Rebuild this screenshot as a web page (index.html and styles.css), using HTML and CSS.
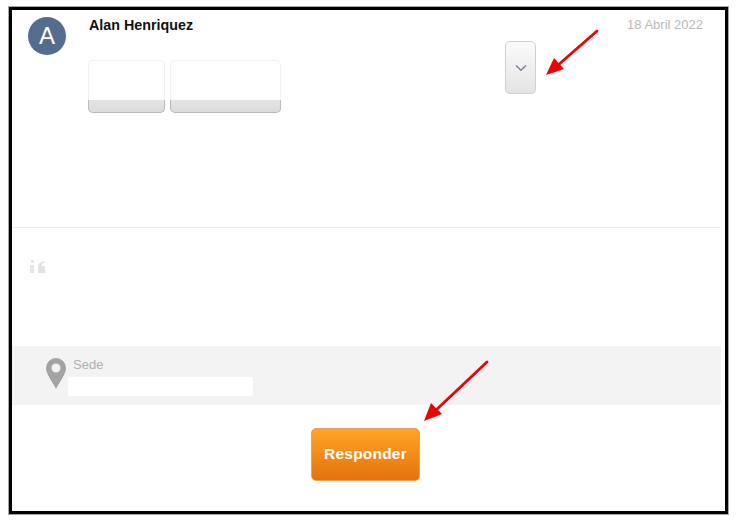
FILE: index.html
```html
<!DOCTYPE html>
<html lang="es">
<head>
<meta charset="utf-8">
<title>Mensaje</title>
<link rel="stylesheet" href="styles.css">
</head>
<body>
<main class="frame">
  <section class="top">
    <div class="avatar">A</div>
    <div class="who">
      <div class="name">Alan Henriquez</div>
      <div class="cards">
        <div class="card card-a"><div class="card-foot"></div></div>
        <div class="card card-b"><div class="card-foot"></div></div>
      </div>
    </div>
    <button class="toggle" aria-label="Expandir">
      <svg width="12" height="8" viewBox="0 0 12 8"><path d="M1 1.500 6 6.200 11 1.500" fill="none" stroke="#7b8594" stroke-width="1.500"/></svg>
    </button>
    <div class="date">18 Abril 2022</div>
  </section>
  <section class="quote">
    <svg width="15" height="13" viewBox="0 0 15 13"><path d="M0 5h4v8H0zM1 0h3v3H1z" fill="#e6e6e6"/><path d="M8 13V7c0-3 2-5 6-6v2c-2 .6-2.500 1.500-2.500 3H15v7z" fill="#e2e2e2"/></svg>
  </section>
  <section class="place">
    <svg class="pin" width="20" height="31" viewBox="0 0 20 31"><path fill-rule="evenodd" d="M10 0a10 10 0 0 1 10 10c0 6-6 13-10 21C6 23 0 16 0 10A10 10 0 0 1 10 0zm0 5.500a4.500 4.500 0 1 0 0 9 4.500 4.500 0 0 0 0-9z" fill="#a3a3a3"/></svg>
    <div class="place-text">
      <div class="place-label">Sede</div>
      <div class="place-value"></div>
    </div>
  </section>
  <div class="actions">
    <button class="reply">Responder</button>
  </div>
</main>
<svg class="arrows" width="739" height="527" viewBox="0 0 739 527">
  <path d="M597 31 557 66" stroke="#f00000" stroke-width="2.800" stroke-linecap="round"/>
  <path d="M546 75 554 58 564 69z" fill="#f00000"/>
  <path d="M487 362 435 411" stroke="#f00000" stroke-width="2.800" stroke-linecap="round"/>
  <path d="M424 421 431 403 442 414z" fill="#f00000"/>
</svg>
</body>
</html>
```
FILE: styles.css
```css
* {
  box-sizing: border-box;
}

html,
body {
  margin: 0;
  height: 100%;
  background: #fff;
  overflow: hidden;
}

body {
  position: relative;
  padding: 7px 0 0 9px;
  font-family: "Liberation Sans", Arial, sans-serif;
}

.frame {
  width: 719px;
  height: 507px;
  border: 3px solid #000;
  box-shadow: 0 0 0 1px rgba(0, 0, 0, 0.35);
  display: flex;
  flex-direction: column;
  background: #fff;
}

.top {
  height: 217px;
  padding: 7px 22px 0 16px;
  display: flex;
  align-items: flex-start;
}

.avatar {
  flex: none;
  width: 38px;
  height: 38px;
  border-radius: 50%;
  background: #546d8e;
  color: #fff;
  font-size: 24px;
  line-height: 38px;
  text-align: center;
}

.who {
  width: 416px;
  margin-left: 23px;
}

.name {
  font-size: 14.3px;
  line-height: 16px;
  font-weight: 700;
  color: #111;
}

.cards {
  display: flex;
  gap: 5px;
  margin-top: 27px;
  margin-left: -1px;
}

.card {
  height: 53px;
  display: flex;
  flex-direction: column;
  justify-content: flex-end;
  border-radius: 5px;
  background: #fff;
  box-shadow: inset 0 0 0 1px #f1f1f1;
}

.card-a {
  width: 77px;
}

.card-b {
  width: 111px;
}

.card-foot {
  height: 13px;
  border: 1px solid #b9b9b9;
  border-top: 0;
  border-radius: 0 0 5px 5px;
  background: linear-gradient(#e4e4e4, #dcdcdc);
}

.toggle {
  flex: none;
  width: 31px;
  height: 53px;
  margin-top: 24px;
  padding: 0;
  border: 1px solid #cfcfcf;
  border-radius: 5px;
  background: linear-gradient(#fbfbfb, #e4e4e4);
  display: flex;
  align-items: center;
  justify-content: center;
}

.date {
  margin-left: auto;
  font-size: 13px;
  line-height: 16px;
  color: #b8b8b8;
}

.quote {
  width: 709px;
  height: 119px;
  padding: 32px 0 0 18px;
  border-top: 1px solid #eeeeee;
}

.quote svg {
  display: block;
}

.place {
  height: 59px;
  width: 709px;
  background: #f3f3f3;
  padding: 12px 0 0 34px;
  display: flex;
  align-items: flex-start;
  gap: 7px;
}

.pin {
  flex: none;
}

.place-label {
  font-size: 13px;
  line-height: 14px;
  color: #b0b0b0;
}

.place-value {
  width: 185px;
  height: 19px;
  margin: 5px 0 0 -5px;
  background: #fff;
  border-radius: 2px;
}

.actions {
  display: flex;
  justify-content: center;
  padding: 23px 6px 0 0;
}

.reply {
  width: 109px;
  height: 53px;
  border: 1px solid #e8a25a;
  border-radius: 5px;
  background: linear-gradient(#ffa526, #e5720c);
  color: #fff;
  font-family: "Liberation Sans", Arial, sans-serif;
  font-size: 15.500px;
  font-weight: 700;
  letter-spacing: 0.2px;
  padding: 0 0 2px;
}

.arrows {
  position: absolute;
  left: 0;
  top: 0;
  pointer-events: none;
}
```
